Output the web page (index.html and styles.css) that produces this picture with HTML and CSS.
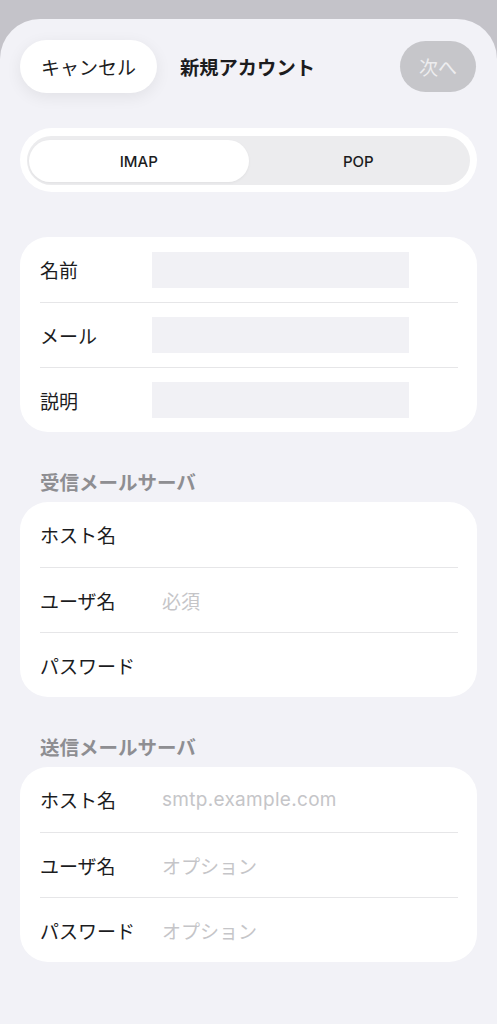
FILE: index.html
```html
<!DOCTYPE html>
<html lang="ja">
<head>
    <meta charset="UTF-8">
    <meta name="viewport" content="width=device-width, initial-scale=1.0">
    <title>新規アカウント</title>
    <link rel="stylesheet" href="styles.css">
</head>
<body>
    <div class="sheet">
        <!-- Navigation -->
        <div class="nav-bar">
            <button class="btn-cancel" type="button">キャンセル</button>
            <h1 class="nav-title">新規アカウント</h1>
            <button class="btn-next" type="button" disabled>次へ</button>
        </div>

        <!-- Account type -->
        <div class="segment">
            <div class="segment-track">
                <div class="segment-item active">IMAP</div>
                <div class="segment-item">POP</div>
            </div>
        </div>

        <!-- Account info -->
        <div class="card">
            <div class="row">
                <span class="row-label">名前</span>
                <span class="row-box"></span>
            </div>
            <div class="row">
                <span class="row-label">メール</span>
                <span class="row-box"></span>
            </div>
            <div class="row">
                <span class="row-label">説明</span>
                <span class="row-box"></span>
            </div>
        </div>

        <!-- Incoming -->
        <h2 class="section-title">受信メールサーバ</h2>
        <div class="card card-server">
            <div class="row">
                <span class="row-label">ホスト名</span>
                <span class="row-value"></span>
            </div>
            <div class="row">
                <span class="row-label">ユーザ名</span>
                <span class="row-value">必須</span>
            </div>
            <div class="row">
                <span class="row-label">パスワード</span>
                <span class="row-value"></span>
            </div>
        </div>

        <!-- Outgoing -->
        <h2 class="section-title">送信メールサーバ</h2>
        <div class="card card-server">
            <div class="row">
                <span class="row-label">ホスト名</span>
                <span class="row-value latin">smtp.example.com</span>
            </div>
            <div class="row">
                <span class="row-label">ユーザ名</span>
                <span class="row-value">オプション</span>
            </div>
            <div class="row">
                <span class="row-label">パスワード</span>
                <span class="row-value">オプション</span>
            </div>
        </div>
    </div>
</body>
</html>
```

FILE: styles.css
```css
body {
    margin: 0;
    font-family: Inter, "Noto Sans CJK JP", sans-serif;
    background: #c4c3c9;
    color: #1c1c1e;
}
.sheet {
    margin-top: 19px;
    min-height: 1005px;
    padding: 21px 20px 0;
    box-sizing: border-box;
    background: #f2f2f7;
    border-radius: 40px 40px 0 0;
}
.nav-bar {
    display: flex;
    align-items: center;
    height: 53px;
}
.btn-cancel {
    width: 137px;
    height: 53px;
    border: none;
    border-radius: 27px;
    background: #fff;
    box-shadow: 0 4px 16px rgba(0, 0, 0, 0.07);
    font-family: "Noto Sans CJK JP", sans-serif;
    font-size: 19px;
    font-weight: 400;
    color: #1c1c1e;
    padding: 0;
}
.nav-title {
    margin: 0 0 0 23px;
    font-family: "Noto Sans CJK JP", sans-serif;
    font-size: 19.3px;
    font-weight: 700;
}
.btn-next {
    margin-left: auto;
    margin-right: 1px;
    width: 76px;
    height: 51px;
    border: none;
    border-radius: 26px;
    background: #c6c6ca;
    color: #ededef;
    font-family: "Noto Sans CJK JP", sans-serif;
    font-size: 19px;
    font-weight: 400;
    padding: 0;
}
.segment {
    margin-top: 35px;
    height: 64px;
    padding: 8px 7px 7px;
    box-sizing: border-box;
    background: #fff;
    border-radius: 32px;
}
.segment-track {
    display: flex;
    height: 49px;
    padding: 4px 2px 3px;
    box-sizing: border-box;
    background: #ececee;
    border-radius: 25px;
}
.segment-item {
    flex: 1;
    display: flex;
    align-items: center;
    justify-content: center;
    font-size: 15px;
    font-weight: 500;
    border-radius: 21px;
}
.segment-item.active {
    background: #fff;
    box-shadow: 0 1px 3px rgba(0, 0, 0, 0.05);
}
.card {
    margin-top: 45px;
    background: #fff;
    border-radius: 28px;
}
.row {
    display: flex;
    align-items: center;
    height: 65px;
    margin: 0 19px 0 20px;
    border-top: 1px solid #e6e6e8;
    box-sizing: border-box;
}
.row:first-child {
    border-top: none;
}
.row-label {
    width: 112px;
    flex-shrink: 0;
    font-family: "Noto Sans CJK JP", sans-serif;
    font-size: 19px;
}
.row-box {
    width: 257px;
    height: 36px;
    background: #f1f1f5;
}
.card-server .row-label {
    width: 122px;
}
.row-value {
    font-family: "Noto Sans CJK JP", sans-serif;
    font-size: 19px;
    color: #c5c5c8;
}
.row-value.latin {
    font-family: Inter, sans-serif;
    letter-spacing: 0.3px;
}
.section-title {
    margin: 38px 0 8px 20px;
    height: 24px;
    line-height: 24px;
    font-family: "Noto Sans CJK JP", sans-serif;
    font-size: 19.5px;
    font-weight: 700;
    color: #8e8e92;
}
.section-title + .card {
    margin-top: 0;
}
```
